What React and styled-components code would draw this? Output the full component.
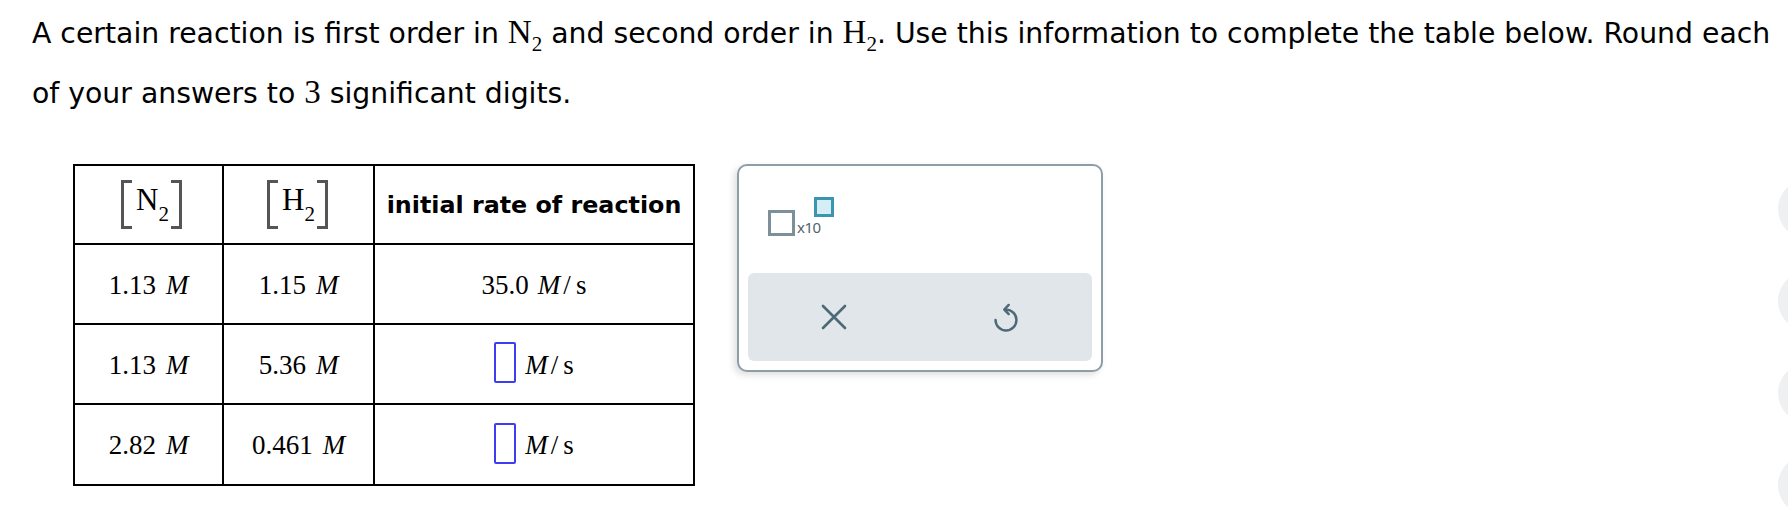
import React from "react";
import styled, { createGlobalStyle } from "styled-components";

const GlobalStyle = createGlobalStyle`
  html, body {
    margin: 0;
    padding: 0;
    background: #fff;
    overflow: hidden;
  }
`;

const Page = styled.div`
  display: flex;
  flex-direction: column;
  width: 1788px;
  height: 514px;
  overflow: hidden;
`;

const TabStub = styled.div`
  width: 62px;
  height: 3px;
  background: #dff0f8;
  border-radius: 0 0 6px 0;
`;

const Body = styled.div`
  flex: 1;
  display: flex;
`;

const Main = styled.div`
  flex: 1;
  padding-left: 32px;
`;

const Prompt = styled.p`
  margin: 4px 0 0;
  font-family: "DejaVu Sans", Verdana, sans-serif;
  font-size: 28.3px;
  line-height: 60px;
  color: #000;
  white-space: nowrap;
`;

const Math = styled.span`
  font-family: "Liberation Serif", "Times New Roman", serif;
  font-size: 33px;
  line-height: 0;
`;

const Sub = styled.sub`
  font-size: 21px;
  line-height: 0;
  vertical-align: -8px;
`;

const Content = styled.div`
  display: flex;
  align-items: flex-start;
  gap: 42px;
  margin: 40px 0 0 41px;
`;

const Grid = styled.div`
  display: grid;
  grid-template-columns: 149px 151px 320px;
  grid-template-rows: 79px 80px 80px 81px;
  border-left: 2px solid #000;
  border-top: 2px solid #000;
`;

const Cell = styled.div`
  display: flex;
  align-items: center;
  justify-content: center;
  border-right: 2px solid #000;
  border-bottom: 2px solid #000;
  font-family: "Liberation Serif", "Times New Roman", serif;
  font-size: 27px;
  color: #000;
  padding-top: ${(p) => (p.$head ? "0" : "2px")};
`;

const HeadText = styled.span`
  font-family: "DejaVu Sans", Verdana, sans-serif;
  font-weight: bold;
  font-size: 23.8px;
`;

const Bracket = styled.span`
  display: inline-block;
  width: 8px;
  height: 43px;
  border: 3px solid #555;
  ${(p) => (p.$side === "left" ? "border-right: none;" : "border-left: none;")}
`;

const Species = styled.span`
  display: inline-flex;
  align-items: baseline;
  margin: 0 2px 0 4px;
  font-size: 31px;
  padding-bottom: 10px;
`;

const SpeciesSub = styled.span`
  font-size: 21px;
  position: relative;
  top: 11px;
`;

const Bracketed = styled.span`
  display: inline-flex;
  align-items: center;
  margin-left: ${(p) => p.$shift || 0}px;
`;

const Unit = styled.i`
  margin-left: 9px;
`;

const Molar = styled.i`
  margin-left: 10px;
`;

const Slash = styled.span`
  margin: 0 5px 0 3px;
`;

const AnswerBox = styled.span`
  display: inline-block;
  width: 22px;
  height: 41px;
  box-sizing: border-box;
  border: 2px solid #3d3df2;
  border-radius: 2px;
  margin-top: -5px;
`;

const Panel = styled.div`
  width: 366px;
  height: 208px;
  box-sizing: border-box;
  border: 2px solid #8d9ea7;
  border-radius: 10px;
  background: #fff;
  box-shadow: -3px 3px 7px rgba(0, 0, 0, 0.13);
  display: flex;
  flex-direction: column;
  padding: 0 9px 9px;
`;

const InputArea = styled.div`
  flex: 1;
  padding: 31px 0 0 20px;
`;

const Sci = styled.div`
  display: flex;
  align-items: flex-start;
`;

const BaseBox = styled.span`
  width: 27px;
  height: 26px;
  box-sizing: border-box;
  border: 3px solid #7b9099;
  margin-top: 13px;
`;

const Times10 = styled.span`
  font-family: "Noto Sans", "Open Sans", sans-serif;
  font-size: 15px;
  line-height: 15px;
  color: #4f646d;
  margin: 23px 0 0 2px;
  letter-spacing: -0.5px;
`;

const ExpBox = styled.span`
  width: 20px;
  height: 20px;
  box-sizing: border-box;
  border: 3px solid #3a96b0;
  background: #d5edf4;
  margin-left: -7px;
`;

const ActionBar = styled.div`
  height: 88px;
  display: grid;
  grid-template-columns: 1fr 1fr;
  background: #e0e6e9;
  border-radius: 6px;
`;

const ActionButton = styled.button`
  display: flex;
  align-items: center;
  justify-content: center;
  border: none;
  background: transparent;
  padding: 0;
  color: #4d6976;
  cursor: pointer;
`;

const Side = styled.div`
  width: 10px;
  display: flex;
  flex-direction: column;
  gap: 32px;
  padding-top: 179px;
`;

const SideDot = styled.span`
  flex-shrink: 0;
  width: 60px;
  height: 60px;
  border-radius: 50%;
  background: #eff0f1;
`;

function Conc({ el, shift }) {
  return (
    <Bracketed $shift={shift}>
      <Bracket $side="left" />
      <Species>
        {el}
        <SpeciesSub>2</SpeciesSub>
      </Species>
      <Bracket $side="right" />
    </Bracketed>
  );
}

function Rate({ value }) {
  return (
    <>
      {value ? <span>{value}</span> : <AnswerBox />}
      <Unit>M</Unit>
      <Slash>/</Slash>s
    </>
  );
}

const rows = [
  { n2: "1.13", h2: "1.15", rate: "35.0" },
  { n2: "1.13", h2: "5.36", rate: null },
  { n2: "2.82", h2: "0.461", rate: null },
];

function CloseIcon() {
  return (
    <svg width="26" height="26" viewBox="0 0 26 26" fill="none">
      <path d="M2 2 24 24M24 2 2 24" stroke="currentColor" strokeWidth="2.6" strokeLinecap="round" />
    </svg>
  );
}

function UndoIcon() {
  return (
    <svg width="30" height="32" viewBox="0 0 24 26" fill="none">
      <path
        d="M3.5 15.5A8.5 8.5 0 1 0 12 7"
        stroke="currentColor"
        strokeWidth="2"
        strokeLinecap="round"
      />
      <path
        d="M14.2 3.2 10.6 7l3.6 3.6"
        stroke="currentColor"
        strokeWidth="2"
        strokeLinecap="round"
        strokeLinejoin="round"
      />
    </svg>
  );
}

export default function App() {
  return (
    <>
      <GlobalStyle />
      <Page>
        <TabStub />
        <Body>
          <Main>
            <Prompt>
              A certain reaction is first order in{" "}
              <Math>
                N<Sub>2</Sub>
              </Math>{" "}
              and second order in{" "}
              <Math>
                H<Sub>2</Sub>
              </Math>
              . Use this information to complete the table below. Round each
              <br />
              of your answers to <Math>3</Math> significant digits.
            </Prompt>

            <Content>
              <Grid>
                <Cell $head>
                  <Conc el="N" shift={6} />
                </Cell>
                <Cell $head>
                  <Conc el="H" shift={-2} />
                </Cell>
                <Cell $head>
                  <HeadText>initial rate of reaction</HeadText>
                </Cell>
                {rows.map((r, i) => (
                  <React.Fragment key={i}>
                    <Cell>
                      {r.n2}
                      <Molar>M</Molar>
                    </Cell>
                    <Cell>
                      {r.h2}
                      <Molar>M</Molar>
                    </Cell>
                    <Cell>
                      <Rate value={r.rate} />
                    </Cell>
                  </React.Fragment>
                ))}
              </Grid>

              <Panel>
                <InputArea>
                  <Sci>
                    <BaseBox />
                    <Times10>x10</Times10>
                    <ExpBox />
                  </Sci>
                </InputArea>
                <ActionBar>
                  <ActionButton aria-label="clear">
                    <CloseIcon />
                  </ActionButton>
                  <ActionButton aria-label="undo">
                    <UndoIcon />
                  </ActionButton>
                </ActionBar>
              </Panel>
            </Content>
          </Main>
          <Side>
            <SideDot />
            <SideDot />
            <SideDot />
            <SideDot />
          </Side>
        </Body>
      </Page>
    </>
  );
}
